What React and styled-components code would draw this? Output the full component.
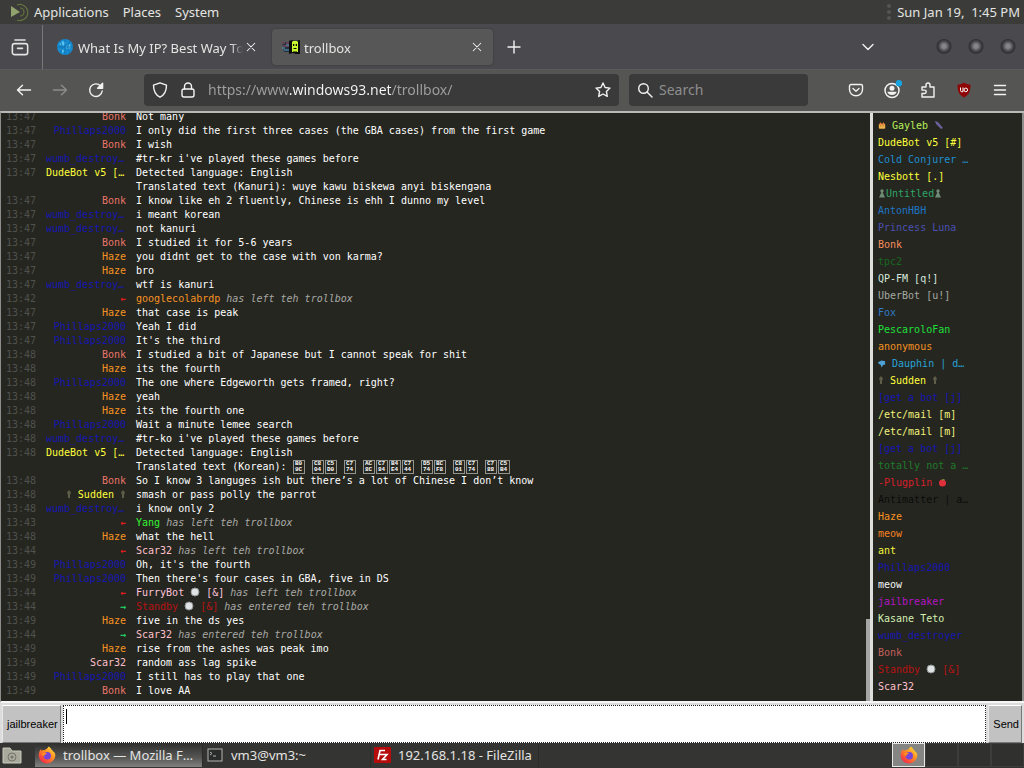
import React from 'react';
import styled, { createGlobalStyle } from 'styled-components';

const GlobalStyle = createGlobalStyle`
  * {
    box-sizing: border-box;
  }

  body {
    margin: 0;
    background: #252620;
    font-family: 'Noto Sans', sans-serif;
    font-size: 13px;
    color: #e4e4e2;
  }

  button,
  input {
    font: inherit;
    color: inherit;
    border: none;
    padding: 0;
    background: transparent;
  }

  svg {
    display: block;
    flex: none;
  }
`;

const Desktop = styled.div`
  display: flex;
  flex-direction: column;
  height: 100vh;
  overflow: hidden;
`;

/* ---------- top panel ---------- */

const Panel = styled.header`
  display: flex;
  align-items: center;
  flex: none;
  height: 24px;
  padding: 0 4px 0 9px;
  background: #3b3c39;
`;

const PanelMenu = styled.nav`
  display: flex;
  align-items: center;
  gap: 14px;
  flex: 1;
  margin-left: 5px;
`;

const PanelButton = styled.button`
  line-height: 24px;
  white-space: nowrap;
`;

const Grip = styled.span`
  height: 16px;
  margin-right: 6px;
  border-left: 4px dotted #555653;
`;

/* ---------- browser tabs ---------- */

const TabBar = styled.div`
  display: flex;
  align-items: center;
  flex: none;
  height: 46px;
  padding-top: 1px;
  background: #4a494e;
  border-bottom: 1px solid #5b5b5b;
`;

const FirefoxView = styled.button`
  display: grid;
  place-items: center;
  width: 43px;
  height: 44px;
  padding-right: 3px;
  border-right: 1px solid #77777a;
`;

const Tab = styled.div`
  display: flex;
  align-items: center;
  width: 221px;
  height: 36px;
  margin-left: ${(p) => (p.$active ? '5px' : '3px')};
  padding: 0 10px;
  border-radius: 4px;
  background: ${(p) => (p.$active ? '#575757' : 'transparent')};
  box-shadow: ${(p) => (p.$active ? '0 0 2px #333333' : 'none')};
`;

const TabTitle = styled.button`
  flex: 1;
  min-width: 0;
  margin: 0 2px 0 4px;
  padding-top: 2px;
  overflow: hidden;
  text-align: left;
  line-height: 20px;
  white-space: nowrap;
  mask-image: linear-gradient(to left, transparent, #000 12px);
`;

const IconButton = styled.button`
  display: grid;
  place-items: center;
  flex: none;
  width: ${(p) => p.$width || 36}px;
  height: 32px;
  color: ${(p) => (p.$dim ? '#8d8d8d' : '#f2f2f2')};
`;

const TabClose = styled(IconButton)`
  width: 12px;
  height: 20px;
`;

const Spacer = styled.div`
  flex: 1;
`;

const WindowButtons = styled.div`
  display: flex;
  gap: 16px;
  padding: 0 8px 0 50px;
`;

const WindowButton = styled.button`
  width: 16px;
  height: 16px;
  border-radius: 50%;
  background: radial-gradient(circle at 50% 45%, #85858a 0 2px, #48484b 5px, #2e2e31 7px, #4a494e 8px);
`;

/* ---------- navigation ---------- */

const NavBar = styled.div`
  display: flex;
  align-items: center;
  flex: none;
  height: 41px;
  padding: 0 6px 1px;
  background: #555554;
`;

const Field = styled.label`
  display: flex;
  align-items: center;
  flex: ${(p) => (p.$search ? '0 0 179px' : 1)};
  gap: ${(p) => (p.$search ? 6 : 12)}px;
  min-width: 0;
  height: 32px;
  margin-left: ${(p) => (p.$search ? '10px' : '30px')};
  padding: 0 8px;
  border-radius: 4px;
  background: #3a3a3a;
  color: #f2f2f2;
`;

const UrlInput = styled.input`
  flex: 1;
  min-width: 0;
  font-size: 14px;
  line-height: 20px;
  background: linear-gradient(90deg, #a0a0a0 81px, #f8f8f8 81px 183px, #a0a0a0 183px);
  background-clip: text;
  -webkit-text-fill-color: transparent;
`;

const SearchInput = styled.input`
  flex: 1;
  min-width: 0;
  font-size: 14px;
  line-height: 20px;

  &::placeholder {
    color: #8e8e8e;
    opacity: 1;
  }
`;

const Tools = styled.div`
  display: flex;
  margin-left: 30px;
`;

/* ---------- chat ---------- */

const Chat = styled.main`
  display: flex;
  flex: 1;
  min-height: 0;
  border-top: 2px solid #b9b9b7;
  border-left: 1px solid #8d8d8b;
  border-bottom: 2px solid #f4f4f4;
  background: #252620;
  font-family: 'DejaVu Sans Mono', monospace;
  font-size: 10px;
`;

const Log = styled.ul`
  display: flex;
  flex-direction: column;
  justify-content: flex-end;
  flex: 1;
  min-width: 0;
  margin: 0;
  padding: 0 0 3px 5px;
  overflow: hidden;
  list-style: none;
`;

const Row = styled.li`
  display: grid;
  grid-template-columns: 30px 80px 1fr;
  column-gap: 10px;
  flex: none;
  line-height: 14px;
`;

const Time = styled.time`
  color: #50514c;
`;

const Nick = styled.span`
  overflow: hidden;
  text-align: right;
  text-overflow: ellipsis;
  white-space: nowrap;
  font-weight: ${(p) => (p.$arrow ? 'bold' : 'normal')};
  color: ${(p) => p.$color};
`;

const Message = styled.span`
  color: #ffffff;
  white-space: pre-line;
`;

const Who = styled.span`
  color: ${(p) => p.$color};
`;

const Event = styled.em`
  color: #a8a8a4;
`;

const HexLine = styled.span`
  display: inline-flex;
  gap: 6px;
  height: 14px;
  margin-left: 6px;
  vertical-align: top;
`;

const HexWord = styled.span`
  display: flex;
`;

const HexBox = styled.span`
  display: flex;
  flex-direction: column;
  align-items: center;
  width: 12px;
  height: 14px;
  margin-right: 1px;
  border: 1px solid #94948f;
  font-family: 'Liberation Mono', monospace;
  font-size: 6px;
  font-weight: bold;
  line-height: 6px;
`;

const Track = styled.div`
  display: flex;
  flex-direction: column;
  justify-content: flex-end;
  width: 4px;
`;

const Thumb = styled.div`
  height: 14%;
  background: #a5a5a5;
`;

const Users = styled.ul`
  flex: none;
  width: 154px;
  margin: 0;
  padding: 4px 0 0 5px;
  overflow: hidden;
  border-left: 3px solid #dededc;
  border-right: 2px solid #8d8d8b;
  list-style: none;
`;

const User = styled.li`
  height: 17px;
  line-height: 17px;
  white-space: pre;
  color: ${(p) => p.$color};
`;

const Emoji = styled.svg`
  display: inline-block;
  vertical-align: -1px;
`;

/* ---------- message form ---------- */

const Form = styled.form`
  display: flex;
  flex: none;
  gap: 2px;
  height: 40px;
  padding: 2px 2px 0;
  background: #dcdcdc;
  color: #000000;
  font-family: 'Liberation Sans', sans-serif;
  font-size: 11px;
`;

const GreyButton = styled.button`
  flex: none;
  padding: 0 2px 0 4px;
  background: #c2c2c2;
  border: 1px solid;
  border-color: #ffffff #777777 #777777 #e8e8e8;
`;

const TextInput = styled.input`
  flex: 1;
  min-width: 0;
  background: linear-gradient(#000000, #000000) 2px 3px / 1px 15px no-repeat #ffffff;
  border: 1px dotted #222222;
  caret-color: transparent;
  outline: none;
`;

/* ---------- task bar ---------- */

const TaskBar = styled.footer`
  display: flex;
  align-items: center;
  flex: none;
  height: 25px;
  padding: 0 0 1px 2px;
  background: #343532;
`;

const Task = styled.button`
  display: flex;
  align-items: center;
  gap: 7px;
  width: 168px;
  height: 24px;
  padding: 0 ${(p) => (p.$active ? 8 : 0)}px 0 3px;
  border-right: 1px solid #2b2c2a;
  background: ${(p) => (p.$active ? 'linear-gradient(#2e2e2e, #555654 60%, #818280)' : 'transparent')};

  span {
    overflow: hidden;
    text-overflow: ellipsis;
    white-space: nowrap;
  }
`;

const Launcher = styled.button`
  margin-right: 13px;
`;

const Workspaces = styled.div`
  display: flex;
  height: 24px;
`;

const Workspace = styled.button`
  display: grid;
  place-items: center;
  width: 33px;
  border: 1px solid ${(p) => (p.$active ? '#e8e8e8' : '#3d3e3b')};
  background: ${(p) => (p.$active ? '#858583' : '#30312e')};
`;

/* ---------- drawings ---------- */

const Icon = ({ size = 16, children }) => (
  <svg
    width={size}
    height={size}
    viewBox='0 0 16 16'
    fill='none'
    stroke='currentColor'
    strokeWidth='1.4'
    strokeLinecap='round'
    strokeLinejoin='round'
    aria-hidden='true'
  >
    {children}
  </svg>
);

const CloseIcon = () => (
  <Icon size={12}>
    <path d='M3 3l10 10M13 3L3 13' />
  </Icon>
);

const Firefox = ({ size = 18 }) => (
  <svg width={size} height={size} viewBox='0 0 18 18' aria-hidden='true'>
    <defs>
      <linearGradient id='flame' x1='1' y1='0' x2='0.2' y2='1'>
        <stop offset='0' stopColor='#fff04a' />
        <stop offset='0.45' stopColor='#ff9422' />
        <stop offset='1' stopColor='#f5224b' />
      </linearGradient>
    </defs>
    <path
      d='M10.5 0.5c2 1 2.7 2.2 3.2 3.6 0.8 0.2 1.2 0.7 1.5 1.3C16.6 6 17.4 7.7 17.3 9.6 17 14 13.5 17.4 9 17.4 4.2 17.4 0.7 13.8 0.7 9.3 0.7 6.7 1.6 4.5 3 3c0 0.8 0.2 1.3 0.6 1.7C4.5 4 5.4 4 6.4 4.2 8 3.5 9.8 2.6 10.5 0.5z'
      fill='url(#flame)'
    />
    <circle cx='9.3' cy='9.8' r='3.7' fill='#7645d8' />
    <path d='M3.5 7.5C5 6 7.5 6 9 7.5 7.5 8 6.5 8.6 6.5 10 4.8 10 3.8 9 3.5 7.5z' fill='#ff8a1f' />
  </svg>
);

const Disc = () => (
  <Emoji width='10' height='10' viewBox='0 0 10 10' aria-hidden='true'>
    <circle cx='5' cy='5' r='4' fill='#dfe3e4' stroke='#8f9496' />
  </Emoji>
);

const Lamp = () => (
  <Emoji width='6' height='10' viewBox='0 0 6 10' aria-hidden='true'>
    <path d='M3 1L5 3.5 4 6v3H2V6L1 3.5z' fill='#5e5d48' />
  </Emoji>
);

const Pawn = () => (
  <Emoji width='8' height='9' viewBox='0 0 8 9' aria-hidden='true'>
    <circle cx='4' cy='2' r='1.7' fill='#6f8c76' />
    <path d='M4 2L7 8.5H1z' fill='#6f8c76' />
  </Emoji>
);

/* ---------- data ---------- */

const BLUE = '#1616b2';

const PHIL = 'Phillaps2000';
const WUMB = 'wumb_destroyer';
const DUDE = 'DudeBot v5 [#]';

const COLORS = {
  Bonk: '#e87468',
  Haze: '#f59222',
  Scar32: '#ffc0cb',
  Yang: '#35f435',
  FurryBot: '#ffc4dc',
  Standby: '#b81212',
  googlecolabrdp: '#f59222',
  Sudden: '#ffff3c',
  [PHIL]: BLUE,
  [WUMB]: BLUE,
  [DUDE]: '#ffff3c',
};

const EVENTS = {
  left: { arrow: '←', color: '#dc1c1c' },
  entered: { arrow: '→', color: '#22c860' },
};

// codepoints of the syllables that the chat font has no glyph for
const KOREAN = ['B09C', 'C804 C5D0', 'C774', 'AC8C C784 B4E4 C744', 'D574 BCF8', 'C801 C774', 'C788 C5B4'];

const LOG = [
  ['13:47', 'Bonk', 'Not many'],
  ['13:47', PHIL, 'I only did the first three cases (the GBA cases) from the first game'],
  ['13:47', 'Bonk', 'I wish'],
  ['13:47', WUMB, "#tr-kr i've played these games before"],
  ['13:47', DUDE, 'Detected language: English\nTranslated text (Kanuri): wuye kawu biskewa anyi biskengəna'],
  ['13:47', 'Bonk', 'I know like eh 2 fluently, Chinese is ehh I dunno my level'],
  ['13:47', WUMB, 'i meant korean'],
  ['13:47', WUMB, 'not kanuri'],
  ['13:47', 'Bonk', 'I studied it for 5-6 years'],
  ['13:47', 'Haze', 'you didnt get to the case with von karma?'],
  ['13:47', 'Haze', 'bro'],
  ['13:47', WUMB, 'wtf is kanuri'],
  ['13:42', 'left', 'googlecolabrdp'],
  ['13:47', 'Haze', 'that case is peak'],
  ['13:47', PHIL, 'Yeah I did'],
  ['13:47', PHIL, "It's the third"],
  ['13:48', 'Bonk', 'I studied a bit of Japanese but I cannot speak for shit'],
  ['13:48', 'Haze', 'its the fourth'],
  ['13:48', PHIL, 'The one where Edgeworth gets framed, right?'],
  ['13:48', 'Haze', 'yeah'],
  ['13:48', 'Haze', 'its the fourth one'],
  ['13:48', PHIL, 'Wait a minute lemee search'],
  ['13:48', WUMB, "#tr-ko i've played these games before"],
  ['13:48', DUDE, 'Detected language: English\nTranslated text (Korean):', KOREAN],
  ['13:48', 'Bonk', 'So I know 3 languges ish but there’s a lot of Chinese I don’t know'],
  ['13:48', 'Sudden', 'smash or pass polly the parrot'],
  ['13:48', WUMB, 'i know only 2'],
  ['13:43', 'left', 'Yang'],
  ['13:48', 'Haze', 'what the hell'],
  ['13:44', 'left', 'Scar32'],
  ['13:49', PHIL, "Oh, it's the fourth"],
  ['13:49', PHIL, "Then there's four cases in GBA, five in DS"],
  ['13:44', 'left', 'FurryBot'],
  ['13:44', 'entered', 'Standby'],
  ['13:49', 'Haze', 'five in the ds yes'],
  ['13:44', 'entered', 'Scar32'],
  ['13:49', 'Haze', 'rise from the ashes was peak imo'],
  ['13:49', 'Scar32', 'random ass lag spike'],
  ['13:49', PHIL, 'I still has to play that one'],
  ['13:49', 'Bonk', 'I love AA'],
];

const USERS = [
  [
    '#b8f05a',
    <>
      <Emoji width='8' height='9' viewBox='0 0 10 10' aria-hidden='true'>
        <rect x='1' y='3' width='8' height='6' rx='1' fill='#f0b24a' />
        <path d='M1 4l2-3 2 2 2-2 2 3z' fill='#e87d3e' />
        <path d='M3 5h1v1H3zM6 5h1v1H6z' fill='#5e3517' />
      </Emoji>
      {' Gayleb '}
      <Emoji width='10' height='10' viewBox='0 0 10 10' aria-hidden='true'>
        <path d='M1 1l3 1 5 6-2 1-5-5z' fill='#69609a' />
      </Emoji>
    </>,
  ],
  ['#ffff3c', DUDE],
  ['#1e8fd0', 'Cold Conjurer …'],
  ['#ffff3c', 'Nesbott [.]'],
  ['#2ea568', <><Pawn />Untitled<Pawn /></>],
  ['#1f74c4', 'AntonHBH'],
  ['#4a50b4', 'Princess Luna'],
  ['#f58d5c', 'Bonk'],
  ['#17661f', 'tpc2'],
  ['#d6e6dc', 'QP-FM [q!]'],
  ['#a5aaa2', 'UberBot [u!]'],
  ['#2f7cc6', 'Fox'],
  ['#1fe03a', 'PescaroloFan'],
  ['#f59222', 'anonymous'],
  [
    '#27a4d8',
    <>
      <Emoji width='8' height='9' viewBox='0 0 9 9' aria-hidden='true'>
        <path d='M0 3l4-2 4 1v4L6 6 4 9 3 6 1 5z' fill='#4fa2d8' />
      </Emoji>
      {' Dauphin | d…'}
    </>,
  ],
  ['#ffff3c', <><Lamp />{' Sudden '}<Lamp /></>],
  [BLUE, '[get a bot [j]'],
  ['#f2f27c', '/etc/mail [m]'],
  ['#f2f27c', '/etc/mail [m]'],
  [BLUE, '[get a bot [j]'],
  ['#1f7a2a', 'totally not a …'],
  [
    '#d81f2c',
    <>
      {'-Plugplin '}
      <Emoji width='9' height='9' viewBox='0 0 9 9' aria-hidden='true'>
        <circle cx='4.5' cy='5' r='3.5' fill='#e0303c' />
        <path d='M4 1l3 0-2 2z' fill='#6b8a3a' />
      </Emoji>
    </>,
  ],
  ['#0b0b0a', 'Antimatter | a…'],
  ['#f59222', 'Haze'],
  ['#f58222', 'meow'],
  ['#f4f43c', 'ant'],
  [BLUE, PHIL],
  ['#f4f4f4', 'meow'],
  ['#b414c4', 'jailbreaker'],
  ['#d4f0b4', 'Kasane Teto'],
  [BLUE, WUMB],
  ['#c4605c', 'Bonk'],
  ['#b81212', <>Standby <Disc /> [&amp;]</>],
  ['#ffc0cb', 'Scar32'],
];

const LogRow = ({ entry: [time, nick, text, glyphs] }) => {
  const event = EVENTS[nick];
  const isBot = text === 'FurryBot' || text === 'Standby';

  if (event) {
    return (
      <Row>
        <Time>{time}</Time>
        <Nick $arrow $color={event.color}>{event.arrow}</Nick>
        <Message>
          <Who $color={COLORS[text]}>
            {text}
            {isBot && <> <Disc /> [&amp;]</>}
          </Who>{' '}
          <Event>has {nick} teh trollbox</Event>
        </Message>
      </Row>
    );
  }

  return (
    <Row>
      <Time>{time}</Time>
      <Nick $color={COLORS[nick]}>{nick === 'Sudden' ? <><Lamp /> Sudden <Lamp /></> : nick}</Nick>
      <Message>
        {text}
        {glyphs && (
          <HexLine>
            {glyphs.map((word) => (
              <HexWord key={word}>
                {word.split(' ').map((code) => (
                  <HexBox key={code}>
                    <span>{code.slice(0, 2)}</span>
                    <span>{code.slice(2)}</span>
                  </HexBox>
                ))}
              </HexWord>
            ))}
          </HexLine>
        )}
      </Message>
    </Row>
  );
};

const App = () => (
  <Desktop>
    <GlobalStyle />

    <Panel>
      <svg width='20' height='20' viewBox='0 0 20 20' aria-hidden='true'>
        <path d='M2 4l9 6-9 5z' fill='#91a36c' />
        <path d='M8 3a8 8 0 1 1 0 15M11 6a4 4 0 1 1 0 8' fill='none' stroke='#64733f' strokeWidth='1.2' />
      </svg>
      <PanelMenu>
        <PanelButton>Applications</PanelButton>
        <PanelButton>Places</PanelButton>
        <PanelButton>System</PanelButton>
      </PanelMenu>
      <Grip />
      <time>Sun Jan 19,&nbsp; 1:45 PM</time>
    </Panel>

    <TabBar>
      <FirefoxView aria-label='Recent browsing'>
        <Icon size={18}>
          <path d='M3.5 1.8h9' />
          <rect x='1.2' y='5' width='13.6' height='9.8' rx='2' />
          <path d='M5.8 9.2h4.4' />
        </Icon>
      </FirefoxView>
      <Tab>
        <svg width='18' height='18' viewBox='0 0 18 18' aria-hidden='true'>
          <circle cx='9' cy='9' r='8' fill='#168bd0' />
          <path d='M3 6l4-3 3 2-3 3zM9 9l5-3 1 4-4 1zM5 11l3 1-1 4z' fill='#54c4ef' />
          <path d='M9 1v16M1 9h16M4 3c3 5 3 8 0 12M14 3c-3 5-3 8 0 12' stroke='#1274b4' fill='none' />
        </svg>
        <TabTitle>What Is My IP? Best Way To</TabTitle>
        <TabClose aria-label='Close tab'>
          <CloseIcon />
        </TabClose>
      </Tab>
      <Tab $active>
        <svg width='18' height='16' viewBox='0 0 18 16' aria-hidden='true'>
          <path d='M0 3h9v10H2z' fill='#26303a' />
          <path d='M0 4h3M4 4h4M1 7h6' stroke='#a0506a' />
          <path d='M0 9h3M2 11h5M4 6h4' stroke='#4fa6c8' />
          <path d='M7 2c3-2 5 1 11-1v14h-4l-3-1-4 1z' fill='#0a0a0a' />
          <path d='M10 3l1-1h4l1 1v10h-1.500v-1h-1v1h-1v-1h-1v1H10z' fill='#c8f52c' />
          <path d='M11 5h1.300v2H11zM13.700 5H15v2h-1.300zM11.500 9h3v1h-3z' fill='#0a0a0a' />
        </svg>
        <TabTitle>trollbox</TabTitle>
        <TabClose aria-label='Close tab'>
          <CloseIcon />
        </TabClose>
      </Tab>
      <IconButton $width={42} aria-label='New tab'>
        <Icon>
          <path d='M8 2v12M2 8h12' />
        </Icon>
      </IconButton>
      <Spacer />
      <IconButton aria-label='List all tabs'>
        <Icon>
          <path d='M3 5.5l5 5 5-5' />
        </Icon>
      </IconButton>
      <WindowButtons>
        <WindowButton aria-label='Minimize' />
        <WindowButton aria-label='Maximize' />
        <WindowButton aria-label='Close' />
      </WindowButtons>
    </TabBar>

    <NavBar>
      <IconButton aria-label='Back'>
        <Icon>
          <path d='M14.5 8H1.5M6.5 3.200L1.5 8l5 4.800' />
        </Icon>
      </IconButton>
      <IconButton $dim aria-label='Forward'>
        <Icon>
          <path d='M1.5 8h13M9.5 3.200l5 4.800-5 4.800' />
        </Icon>
      </IconButton>
      <IconButton aria-label='Reload'>
        <Icon>
          <path d='M14.2 9A6.3 6.3 0 1 1 12.5 3.8' />
          <path d='M14.6 1.2v5h-5z' fill='currentColor' />
        </Icon>
      </IconButton>
      <Field>
        <Icon>
          <path d='M8 0.8l6.5 2.4c0 5.5-1.5 9.5-6.5 12-5-2.5-6.5-6.5-6.5-12z' />
        </Icon>
        <Icon>
          <rect x='2' y='7' width='12' height='8' rx='2' />
          <path d='M4.5 7V4.5a3.5 3.5 0 0 1 7 0V7' />
        </Icon>
        <UrlInput aria-label='Address' defaultValue='https://www.windows93.net/trollbox/' />
        <Icon>
          <path d='M8 1l2.1 4.5 4.9 0.6-3.6 3.4 0.9 4.9L8 12l-4.3 2.4 0.9-4.9L1 6.1l4.9-0.6z' />
        </Icon>
      </Field>
      <Field $search>
        <Icon>
          <circle cx='6.5' cy='6.5' r='4.8' />
          <path d='M10 10l5 5' />
        </Icon>
        <SearchInput aria-label='Search' placeholder='Search' />
      </Field>
      <Tools>
        <IconButton aria-label='Save to Pocket'>
          <Icon>
            <path d='M3 2.5h10a1.5 1.5 0 0 1 1.5 1.5V7.5a6.5 6.2 0 0 1-13 0V4A1.5 1.5 0 0 1 3 2.5zM5 6.5l3 2.8 3-2.8' />
          </Icon>
        </IconButton>
        <IconButton aria-label='Account'>
          <svg width='20' height='20' viewBox='0 0 20 20' aria-hidden='true'>
            <circle cx='10' cy='10.5' r='7' fill='none' stroke='#f2f2f2' strokeWidth='1.5' />
            <circle cx='10' cy='8.3' r='2.5' fill='#f2f2f2' />
            <path d='M5.3 11.8h9.4a5 5 0 0 1-9.4 0z' fill='#f2f2f2' />
            <circle cx='17' cy='3.3' r='3.2' fill='#16a4e0' />
          </svg>
        </IconButton>
        <IconButton aria-label='Extensions'>
          <Icon>
            <path d='M2 5h4V3a2 2 0 0 1 4 0v2h4v10H2v-3.5h2.5a1.7 1.7 0 0 0 0-3.4H2z' />
          </Icon>
        </IconButton>
        <IconButton aria-label='uBlock Origin'>
          <svg width='16' height='16' viewBox='0 0 16 16' aria-hidden='true'>
            <path d='M8 0.5c2 1.5 4 2 6.5 2 0 6-1 10-6.5 13-5.5-3-6.5-7-6.5-13C4 2.5 6 2 8 0.5z' fill='#8e0606' />
            <path d='M4.5 5.5v3q0 1.2 1.2 1.2H7V5.5' fill='none' stroke='#fff' />
            <circle cx='9.8' cy='7.9' r='1.8' fill='none' stroke='#fff' />
          </svg>
        </IconButton>
        <IconButton aria-label='Menu'>
          <Icon>
            <path d='M2.5 3.5h11M2.5 8h11M2.5 12.5h11' />
          </Icon>
        </IconButton>
      </Tools>
    </NavBar>

    <Chat>
      <Log>
        {LOG.map((entry, i) => (
          <LogRow key={i} entry={entry} />
        ))}
      </Log>
      <Track>
        <Thumb />
      </Track>
      <Users>
        {USERS.map(([color, name], i) => (
          <User key={i} $color={color}>
            {name}
          </User>
        ))}
      </Users>
    </Chat>

    <Form onSubmit={(e) => e.preventDefault()}>
      <GreyButton type='button'>jailbreaker</GreyButton>
      <TextInput aria-label='Message' />
      <GreyButton>Send</GreyButton>
    </Form>

    <TaskBar>
      <Launcher aria-label='Show files'>
        <svg width='20' height='18' viewBox='0 0 20 18' aria-hidden='true'>
          <path d='M1 2h7l2 3h9v12H1z' fill='#a9aa9c' stroke='#c8c9bc' />
          <circle cx='10' cy='11' r='4' fill='none' stroke='#75766a' />
          <circle cx='10' cy='11' r='1.5' fill='#75766a' />
        </svg>
      </Launcher>
      <Task $active>
        <Firefox />
        <span>trollbox — Mozilla Firefox</span>
      </Task>
      <Task>
        <svg width='18' height='14' viewBox='0 0 18 14' aria-hidden='true'>
          <rect x='2' y='1' width='14' height='12' fill='#2a2c2b' stroke='#b4b5b2' />
          <path d='M4 4l2 1.5L4 7M7 8h3' fill='none' stroke='#b4b5b2' />
        </svg>
        <span>vm3@vm3:~</span>
      </Task>
      <Task>
        <svg width='17' height='16' viewBox='0 0 17 16' aria-hidden='true'>
          <rect width='17' height='16' rx='1' fill='#b50b0b' />
          <path d='M4 12.5L6 3.5h5M5 7.5h4M9 7.5h4L8.5 12.5h4' fill='none' stroke='#fff' strokeWidth='1.6' />
        </svg>
        <span>192.168.1.18 - FileZilla</span>
      </Task>
      <Spacer />
      <Workspaces>
        <Workspace $active aria-label='Workspace 1'>
          <Firefox />
        </Workspace>
        <Workspace aria-label='Workspace 2' />
        <Workspace aria-label='Workspace 3' />
        <Workspace aria-label='Workspace 4' />
      </Workspaces>
    </TaskBar>
  </Desktop>
);

export default App;
